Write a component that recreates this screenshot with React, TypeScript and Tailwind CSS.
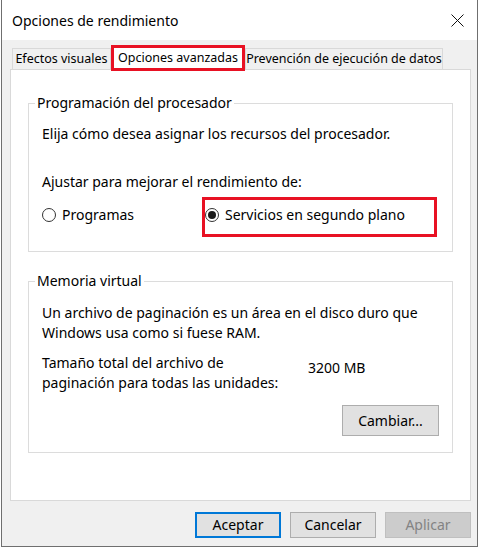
import React from 'react';

const font = { fontFamily: '"Segoe UI", "Noto Sans", sans-serif' };

function Radio({ checked, label }: { checked?: boolean; label: string }) {
  return (
    <label className="flex items-center gap-[6px] whitespace-nowrap">
      <span className="flex h-[14px] w-[14px] items-center justify-center rounded-full border border-[#333] bg-white">
        {checked && <span className="h-[8px] w-[8px] rounded-full bg-[#1a1a1a]" />}
      </span>
      <span>{label}</span>
    </label>
  );
}

function Btn({ children, primary, disabled, className = '' }: { children: React.ReactNode; primary?: boolean; disabled?: boolean; className?: string }) {
  const look = disabled
    ? 'bg-[#cccccc] border-[#bfbfbf] text-[#838383]'
    : primary
      ? 'bg-[#e1e1e1] border-2 border-[#0078d7] text-black'
      : 'bg-[#e1e1e1] border-[#adadad] text-black';
  return (
    <button className={`flex items-center justify-center border ${look} ${className}`}>{children}</button>
  );
}

export default function App() {
  return (
    <div className="h-[548px] w-[480px] whitespace-nowrap bg-white text-[14px] leading-[20px] text-black" style={font}>
      <div className="ml-[1px] flex h-[547px] w-[477px] flex-col border-x border-b border-[#6f6f6f] bg-[#f0f0f0]">
        {/* title bar */}
        <div className="flex h-[40px] shrink-0 items-center justify-between bg-white pl-[10px] pr-[13px]">
          <span className="pt-[1px]">Opciones de rendimiento</span>
          <svg width="13" height="13" viewBox="0 0 13 13">
            <path d="M0.5 0.5 L12.5 12.5 M12.5 0.5 L0.5 12.5" stroke="#111" strokeWidth="1" />
          </svg>
        </div>

        {/* tabs */}
        <div className="ml-[8px] mt-[4px] flex h-[25px] items-end pl-[2px] text-[12.5px]">
          <div className="flex h-[21px] w-[99px] items-center justify-center border border-b-0 border-[#d9d9d9] bg-[#f0f0f0]">Efectos visuales</div>
          <div className="relative z-10 -mb-[2px] flex h-[26px] w-[134px] items-center justify-center border-[3px] border-[#e81123] bg-white">Opciones avanzadas</div>
          <div className="flex h-[21px] w-[198px] items-center justify-center border border-b-0 border-[#d9d9d9] bg-[#f0f0f0]">Prevención de ejecución de datos</div>
        </div>

        {/* panel */}
        <div className="ml-[8px] flex h-[432px] w-[461px] flex-col gap-[19px] border border-[#d9d9d9] bg-white px-[17px] pt-[23px]">
          <fieldset className="min-w-0 border border-[#dcdcdc] px-[13px] pb-[26px]">
            <legend className="-ml-[7px] px-[2px]">Programación del procesador</legend>
            <p className="mt-[11px]">Elija cómo desea asignar los recursos del procesador.</p>
            <p className="mt-[28px]">Ajustar para mejorar el rendimiento de:</p>
            <div className="relative mt-[13px] flex">
              <div className="w-[163px]">
                <Radio label="Programas" />
              </div>
              <Radio checked label="Servicios en segundo plano" />
              <div className="absolute left-[160px] top-[-8px] h-[40px] w-[235px] border-[3px] border-[#e81123]" />
            </div>
          </fieldset>

          <fieldset className="min-w-0 border border-[#dcdcdc] px-[13px] pb-[16px]">
            <legend className="-ml-[7px] px-[2px]">Memoria virtual</legend>
            <p className="mt-[12px]">
              Un archivo de paginación es un área en el disco duro que
              <br />
              Windows usa como si fuese RAM.
            </p>
            <div className="mt-[10px] flex">
              <p className="w-[266px]">
                Tamaño total del archivo de
                <br />
                paginación para todas las unidades:
              </p>
              <span className="mt-[5px]">3200 MB</span>
            </div>
            <div className="mt-[12px] flex justify-end">
              <Btn className="h-[31px] w-[97px]">Cambiar...</Btn>
            </div>
          </fieldset>
        </div>

        {/* footer */}
        <div className="mt-[11px] flex justify-end gap-[9px] pr-[6px]">
          <Btn primary className="h-[26px] w-[86px]">Aceptar</Btn>
          <Btn className="h-[26px] w-[86px]">Cancelar</Btn>
          <Btn disabled className="h-[26px] w-[86px]">Aplicar</Btn>
        </div>
      </div>
    </div>
  );
}
